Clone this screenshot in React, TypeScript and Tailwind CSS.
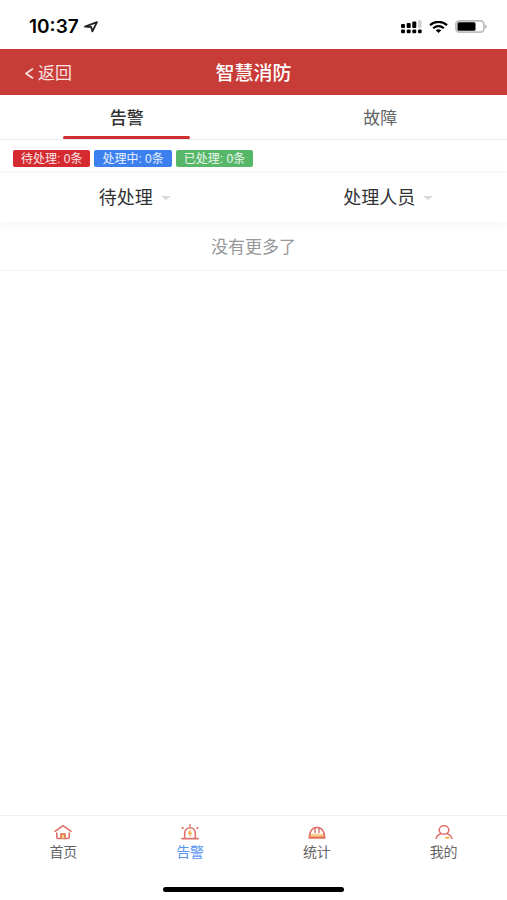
import React, { useState } from "react";
import clsx from "clsx";

const tabs = ["告警", "故障"];

const counters = [
  { label: "待处理", count: 0, color: "bg-[#d42a30]" },
  { label: "处理中", count: 0, color: "bg-[#3c7fee]" },
  { label: "已处理", count: 0, color: "bg-[#56b768]" },
];

const StatusBar: React.FC = () => (
  <div className="flex h-[49px] shrink-0 items-center justify-between pt-1 pr-5 pl-[29px] text-black">
    <div className="flex items-center gap-1">
      <span className="font-['Inter','Liberation_Sans',sans-serif] text-[19px] leading-6 font-semibold">
        10:37
      </span>
      <svg className="h-3 w-4" viewBox="0 0 16 12" fill="none" aria-hidden="true">
        <path
          d="M2 5.7 14 1.2 9.4 10.4 8.2 6Z"
          stroke="#222"
          strokeWidth="1.8"
          strokeLinejoin="round"
        />
      </svg>
    </div>
    <div className="flex items-center gap-[7px]">
      <svg className="h-[14px] w-[21px]" viewBox="0 0 21 14" aria-hidden="true">
        <rect x="0" y="4" width="4" height="4" rx="1" />
        <rect x="5.7" y="3" width="4" height="5" rx="1" />
        <rect x="11.3" y="1.5" width="4" height="6.5" rx="1" />
        <rect x="17" y="0" width="3.5" height="8" rx="1" fill="#d2d2d2" />
        <rect x="0" y="9.5" width="4" height="3.7" rx="1.2" />
        <rect x="5.7" y="9.5" width="4" height="3.7" rx="1.2" />
        <rect x="11.3" y="9.5" width="4" height="3.7" rx="1.2" />
        <rect x="17" y="9.5" width="3.7" height="3.7" rx="1.2" />
      </svg>
      <svg className="h-3 w-[19px]" viewBox="0 0 19 12" fill="none" aria-hidden="true">
        <path d="M1 4.1C5.7-.2 13.3-.2 18 4.1" stroke="#000" strokeWidth="2.3" />
        <path d="M4.2 7.2c3-2.7 7.6-2.7 10.6 0" stroke="#000" strokeWidth="2.2" />
        <path d="M6.7 9.2c1.7-1.3 3.9-1.3 5.6 0L9.5 12Z" fill="#000" />
      </svg>
      <svg className="h-[13px] w-8" viewBox="0 0 32 13" fill="none" aria-hidden="true">
        <rect x=".9" y=".9" width="28" height="11.2" rx="3.5" stroke="#bdbdbd" strokeWidth="1.8" />
        <rect x="2.5" y="2.2" width="18" height="8.6" rx="1.5" fill="#000" />
        <path d="M30.2 4.5c2 .6 2 3.4 0 4Z" fill="#b5b5b5" />
      </svg>
    </div>
  </div>
);

const HomeIcon: React.FC = () => (
  <svg className="h-4 w-[18px]" viewBox="0 0 18 16" fill="none" aria-hidden="true">
    <path d="M1 7.4 9 1.6l8 5.8" stroke="#e0706b" strokeWidth="1.6" strokeLinecap="round" strokeLinejoin="round" />
    <path d="M2.8 9v4.2c0 .8.5 1.3 1.3 1.3h9.8c.8 0 1.3-.5 1.3-1.3V9" stroke="#e0706b" strokeWidth="1.6" strokeLinecap="round" />
    <path d="M7 14.3V10h4v4.3" fill="#fbd08a" stroke="#d9683f" strokeWidth="1.4" />
  </svg>
);

const AlarmIcon: React.FC = () => (
  <svg className="h-4 w-[18px]" viewBox="0 0 18 16" fill="none" aria-hidden="true">
    <path d="M3.7 14.3V9a5.3 5.3 0 0 1 10.6 0v5.3" stroke="#e0706b" strokeWidth="1.6" />
    <path d="M.9 14.6h16.200" stroke="#e0706b" strokeWidth="1.6" strokeLinecap="round" />
    <path d="M9 .8v1.200M1.200 3.800l.8.5M16.800 3.800l-.8.5" stroke="#e0706b" strokeWidth="1.6" strokeLinecap="round" />
    <path d="M9.200 6.800 7.600 9.200h2.800L8.800 11.600" stroke="#f6b04a" strokeWidth="1.5" strokeLinecap="round" strokeLinejoin="round" />
  </svg>
);

const HelmetIcon: React.FC = () => (
  <svg className="h-4 w-[18px]" viewBox="0 0 18 16" fill="none" aria-hidden="true">
    <path d="M1.800 9.800h14.400v3H1.800z" fill="#fbd08a" />
    <path d="M1.500 12.800C1.500 7.200 4.500 3.400 9 3.400s7.500 3.800 7.500 9.400" stroke="#e0706b" strokeWidth="1.6" />
    <path d="M7 4v4.500M11 4v4.500" stroke="#e0706b" strokeWidth="1.4" strokeLinecap="round" />
    <path d="M1.300 13.600h15.400" stroke="#df7350" strokeWidth="2.2" strokeLinecap="round" />
  </svg>
);

const UserIcon: React.FC = () => (
  <svg className="h-4 w-[18px]" viewBox="0 0 18 16" fill="none" aria-hidden="true">
    <ellipse cx="9" cy="6" rx="4.8" ry="4.2" stroke="#e0706b" strokeWidth="1.6" />
    <path d="M1.200 14.300c.5-2.300 2.300-3.900 4.900-4.600M11.900 9.700c2.600.7 4.400 2.300 4.900 4.600" stroke="#e0706b" strokeWidth="1.6" strokeLinecap="round" />
    <path d="M11 13.700h2.600" stroke="#f6b04a" strokeWidth="2" strokeLinecap="round" />
  </svg>
);

const navItems = [
  { label: "首页", href: "#home", icon: HomeIcon },
  { label: "告警", href: "#alarm", icon: AlarmIcon },
  { label: "统计", href: "#stats", icon: HelmetIcon },
  { label: "我的", href: "#mine", icon: UserIcon },
];

const FilterSelect: React.FC<{ name: string; options: string[] }> = ({ name, options }) => (
  <div className="flex flex-1 items-center justify-center gap-2 pl-4">
    <select
      aria-label={name}
      className="field-sizing-content appearance-none bg-transparent text-lg leading-6 text-[#323233] outline-none"
    >
      {options.map((option) => (
        <option key={option}>{option}</option>
      ))}
    </select>
    <svg className="h-1 w-[10px]" viewBox="0 0 10 4" aria-hidden="true">
      <path d="M0 0h10L5 4Z" fill="#d9dadc" />
    </svg>
  </div>
);

const App: React.FC = () => {
  const [activeTab, setActiveTab] = useState("告警");
  const [activeNav, setActiveNav] = useState("告警");

  return (
    <div className="flex min-h-screen flex-col bg-white font-['Liberation_Sans','Noto_Sans_CJK_SC',sans-serif]">
      <StatusBar />

      <header className="grid h-[46px] shrink-0 grid-cols-3 items-center bg-[#c83c37] pt-[3px] text-white">
        <button type="button" className="flex items-center gap-1 justify-self-start pl-6 text-[17px] leading-6 text-[#fbe3e1]">
          <svg className="h-3 w-[10px]" viewBox="0 0 10 12" fill="none" aria-hidden="true">
            <path d="M8.500 1 2 5.500l6.500 4.500" stroke="currentColor" strokeWidth="1.6" strokeLinecap="round" strokeLinejoin="round" />
          </svg>
          返回
        </button>
        <h1 className="text-center text-[19px] leading-6 font-medium">智慧消防</h1>
      </header>

      <div role="tablist" className="flex h-[45px] shrink-0 border-b border-[#e8e9ea]">
        {tabs.map((tab) => (
          <button
            key={tab}
            type="button"
            role="tab"
            aria-selected={tab === activeTab}
            onClick={() => setActiveTab(tab)}
            className={clsx(
              "flex flex-1 flex-col items-center justify-between text-[17px]",
              tab === activeTab ? "font-medium text-[#323233]" : "text-[#646566]"
            )}
          >
            <span className="pt-3 leading-6">{tab}</span>
            <span className={clsx("h-[3px] w-1/2 rounded-full", tab === activeTab && "bg-[#cf2d30]")} />
          </button>
        ))}
      </div>

      <main className="flex-1">
        <div className="flex h-8 items-center gap-1 px-[13px] pt-1">
          {counters.map((item) => (
            <span
              key={item.label}
              className={clsx("rounded-xs px-2 pt-px text-xs leading-4 text-white/90", item.color)}
            >
              {item.label}: {item.count}条
            </span>
          ))}
        </div>

        <div className="flex h-[50px] border-t border-[#f6f6f7] shadow-[0_2px_10px_rgba(100,101,102,0.08)]">
          <FilterSelect name="状态" options={["待处理"]} />
          <FilterSelect name="人员" options={["处理人员"]} />
        </div>

        <p className="border-b border-[#f2f3f5] pt-[14px] pb-[10px] text-center text-[17px] leading-6 text-[#969799]">
          没有更多了
        </p>
      </main>

      <nav className="flex h-[52px] shrink-0 border-t border-[#f0f1f2] pt-px">
        {navItems.map(({ label, href, icon: Icon }) => (
          <a
            key={label}
            href={href}
            onClick={() => setActiveNav(label)}
            className={clsx(
              "flex flex-1 flex-col items-center justify-center gap-1 text-sm leading-4",
              label === activeNav ? "text-[#5794f2]" : "text-[#646566]"
            )}
          >
            <Icon />
            {label}
          </a>
        ))}
      </nav>
      <div className="flex h-[33px] shrink-0 items-end justify-center pb-2">
        <div className="h-[5px] w-[181px] rounded-full bg-black" />
      </div>
    </div>
  );
};

export default App;
